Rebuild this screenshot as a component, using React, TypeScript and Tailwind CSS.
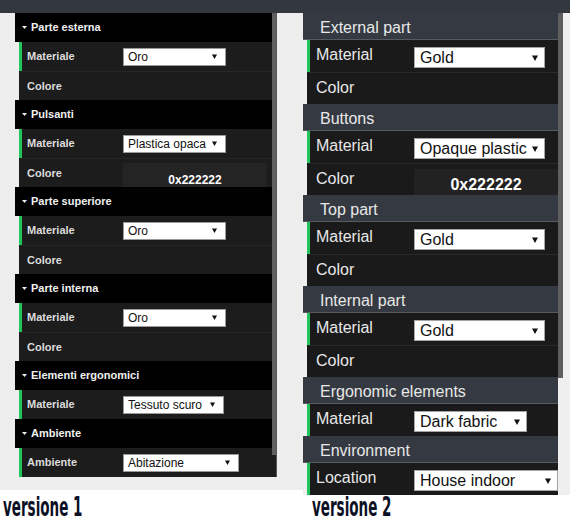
import React from "react";

type Row = { label: string; select?: string; w?: number; color?: string };
type Section = { title: string; rows: Row[] };

const left: Section[] = [
  { title: "Parte esterna", rows: [{ label: "Materiale", select: "Oro", w: 103 }, { label: "Colore" }] },
  { title: "Pulsanti", rows: [{ label: "Materiale", select: "Plastica opaca", w: 103 }, { label: "Colore", color: "0x222222" }] },
  { title: "Parte superiore", rows: [{ label: "Materiale", select: "Oro", w: 103 }, { label: "Colore" }] },
  { title: "Parte interna", rows: [{ label: "Materiale", select: "Oro", w: 103 }, { label: "Colore" }] },
  { title: "Elementi ergonomici", rows: [{ label: "Materiale", select: "Tessuto scuro", w: 101 }] },
  { title: "Ambiente", rows: [{ label: "Ambiente", select: "Abitazione", w: 116 }] },
];

const right: Section[] = [
  { title: "External part", rows: [{ label: "Material", select: "Gold", w: 131 }, { label: "Color" }] },
  { title: "Buttons", rows: [{ label: "Material", select: "Opaque plastic", w: 131 }, { label: "Color", color: "0x222222" }] },
  { title: "Top part", rows: [{ label: "Material", select: "Gold", w: 131 }, { label: "Color" }] },
  { title: "Internal part", rows: [{ label: "Material", select: "Gold", w: 131 }, { label: "Color" }] },
  { title: "Ergonomic elements", rows: [{ label: "Material", select: "Dark fabric", w: 113 }] },
  { title: "Environment", rows: [{ label: "Location", select: "House indoor", w: 144 }] },
];

function Arrow({ s }: { s: number }) {
  return (
    <svg width={s} height={s} viewBox="0 0 6 6" className="shrink-0">
      <path d="M0 0.5H6L3 6Z" fill="#111" />
    </svg>
  );
}

function Caret() {
  return (
    <svg width="5" height="3" viewBox="0 0 5 3" className="shrink-0">
      <path d="M0 0H5L2.5 3Z" fill="#eeeeee" />
    </svg>
  );
}

function LeftPanel() {
  return (
    <div className="flex">
      <div className="w-[257px] flex flex-col">
        {left.map((sec) => (
          <div key={sec.title} className="flex flex-col">
            <div className="h-[29px] bg-black flex items-center pl-[7px] gap-[4px] text-[11px] font-bold text-[#f0f0f0]">
              <Caret />
              <span>{sec.title}</span>
            </div>
            {sec.rows.map((r, i) => (
              <div
                key={i}
                className={
                  "h-[29px] ml-[4px] border-l-[3px] bg-[#1c1c1c] flex items-center " +
                  (r.select ? "border-[#20c65c]" : "border-transparent border-t border-t-[#262626]")
                }
              >
                <div className="w-[101px] pl-[5px] text-[11px] font-bold text-[#dcdcdc]">{r.label}</div>
                {r.select && (
                  <div
                    className="h-[18px] bg-white border border-[#9a9a9a] flex items-center justify-between pl-[4px] pr-[8px] text-[12px] text-[#111]"
                    style={{ width: r.w }}
                  >
                    <span>{r.select}</span>
                    <Arrow s={5} />
                  </div>
                )}
                {r.color && (
                  <div className="self-end h-[24px] w-[144px] bg-[#242424] flex items-end justify-center text-[12px] leading-[14px] font-bold text-white">
                    {r.color}
                  </div>
                )}
              </div>
            ))}
          </div>
        ))}
      </div>
      <div className="w-[5px] flex flex-col bg-[#1c1c1c] border-r border-[#555]">
        <div className="h-[442px] bg-[#5f5f5f]" />
      </div>
    </div>
  );
}

function RightPanel() {
  return (
    <div className="flex items-start">
      <div className="w-[255px] flex flex-col">
        {right.map((sec) => (
          <div key={sec.title} className="flex flex-col">
            <div className="h-[27px] bg-[#353a42] border-b border-[#565b62] flex items-center pl-[17px] pt-[3px] text-[16px] leading-[18px] text-[#e8e8e8]">
              {sec.title}
            </div>
            {sec.rows.map((r, i) => (
              <div
                key={i}
                className={
                  "h-[32px] ml-[4px] border-l-[3px] bg-[#1a1a1a] flex items-start " +
                  (r.select ? "border-[#20c65c]" : "border-transparent border-t border-t-[#2a2a2a]")
                }
              >
                <div className="w-[104px] pl-[6px] pt-[6px] text-[16px] leading-[18px] text-[#e8e8e8]">{r.label}</div>
                {r.select && (
                  <div
                    className="mt-[7px] h-[21px] bg-white border border-[#a5a5a5] flex items-center justify-between pl-[5px] pr-[6px] text-[16px] leading-none text-[#111]"
                    style={{ width: r.w }}
                  >
                    <span>{r.select}</span>
                    <Arrow s={6} />
                  </div>
                )}
                {r.color && (
                  <div className="mt-[5px] h-[26px] w-[144px] bg-[#222222] flex items-end justify-center pb-[1px] text-[16px] leading-[18px] font-bold text-white">
                    {r.color}
                  </div>
                )}
              </div>
            ))}
          </div>
        ))}
      </div>
      <div className="w-[5px] h-[365px] bg-[#5e5e5e]" />
    </div>
  );
}

function Label({ text }: { text: string }) {
  return (
    <span className="inline-block origin-bottom scale-y-[1.75] font-['DejaVu_Sans_Condensed','DejaVu_Sans',sans-serif] [font-stretch:condensed] font-bold text-[15px] leading-[15px] text-[#0b1024]">
      {text}
    </span>
  );
}

export default function App() {
  return (
    <div className="w-[570px] h-[523px] bg-white flex flex-col overflow-hidden font-['Liberation_Sans','Arial',sans-serif]">
      <div className="h-[13px] bg-[#33383f] shrink-0" />
      <div className="flex">
        <div className="w-[303px] flex flex-col">
          <div className="bg-[#ededed] pl-[15px] pr-[26px] pb-[13px]">
            <LeftPanel />
          </div>
          <div className="h-[33px] flex items-end pl-[3px] pb-[2px]">
            <Label text="versione 1" />
          </div>
        </div>
        <div className="w-[267px] flex flex-col">
          <div className="bg-[#efefef]">
            <RightPanel />
          </div>
          <div className="h-[28px] flex items-end pl-[9px] pb-[2px]">
            <Label text="versione 2" />
          </div>
        </div>
      </div>
    </div>
  );
}
